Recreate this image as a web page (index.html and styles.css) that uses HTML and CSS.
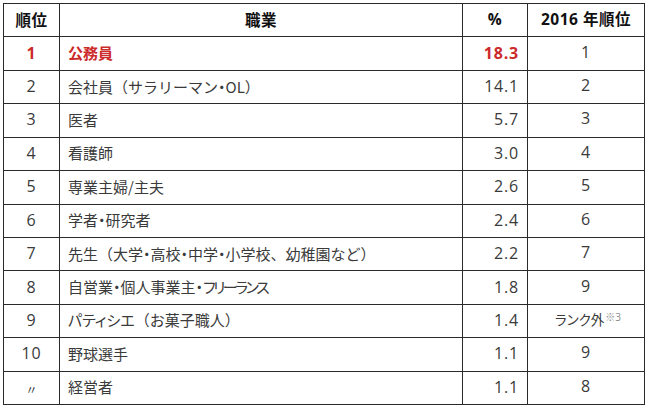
FILE: index.html
```html
<!DOCTYPE html>
<html lang="ja">
<head>
<meta charset="utf-8">
<link rel="stylesheet" href="styles.css">
</head>
<body>
<div class="table">
  <div class="cell rank head">順位</div>
  <div class="cell job head center">職業</div>
  <div class="cell pct head center">%</div>
  <div class="cell prev head">2016 年順位</div>

  <div class="cell rank red bold">1</div>
  <div class="cell job red bold">公務員</div>
  <div class="cell pct red bold">18.3</div>
  <div class="cell prev">1</div>

  <div class="cell rank">2</div>
  <div class="cell job">会社員（サラリーマン<span class="dot">・</span>OL）</div>
  <div class="cell pct">14.1</div>
  <div class="cell prev">2</div>

  <div class="cell rank">3</div>
  <div class="cell job">医者</div>
  <div class="cell pct">5.7</div>
  <div class="cell prev">3</div>

  <div class="cell rank">4</div>
  <div class="cell job">看護師</div>
  <div class="cell pct">3.0</div>
  <div class="cell prev">4</div>

  <div class="cell rank">5</div>
  <div class="cell job">専業主婦/主夫</div>
  <div class="cell pct">2.6</div>
  <div class="cell prev">5</div>

  <div class="cell rank">6</div>
  <div class="cell job">学者<span class="dot">・</span>研究者</div>
  <div class="cell pct">2.4</div>
  <div class="cell prev">6</div>

  <div class="cell rank">7</div>
  <div class="cell job">先生（大学<span class="dot">・</span>高校<span class="dot">・</span>中学<span class="dot">・</span>小学校、幼稚園など）</div>
  <div class="cell pct">2.2</div>
  <div class="cell prev">7</div>

  <div class="cell rank">8</div>
  <div class="cell job">自営業<span class="dot">・</span>個人事業主<span class="dot">・</span><span class="narrow">フリーランス</span></div>
  <div class="cell pct">1.8</div>
  <div class="cell prev">9</div>

  <div class="cell rank">9</div>
  <div class="cell job"><span class="semi">パティシエ</span>（お菓子職人）</div>
  <div class="cell pct">1.4</div>
  <div class="cell prev out"><span class="out-text">ランク外</span><sup class="note">※3</sup></div>

  <div class="cell rank">10</div>
  <div class="cell job">野球選手</div>
  <div class="cell pct">1.1</div>
  <div class="cell prev">9</div>

  <div class="cell rank ditto">〃</div>
  <div class="cell job">経営者</div>
  <div class="cell pct">1.1</div>
  <div class="cell prev">8</div>
</div>
</body>
</html>
```
FILE: styles.css
```css
html, body {
  margin: 0;
  padding: 0;
  background: #ffffff;
}

body {
  padding: 3px 0 0 3px;
}

.table {
  display: grid;
  grid-template-columns: 55px 402px 64px 116px;
  grid-template-rows: repeat(12, 1fr);
  gap: 1px;
  padding: 1px;
  width: 642px;
  height: 402px;
  box-sizing: border-box;
  background: #2a2a2a;
}

.cell {
  background: #ffffff;
  display: flex;
  align-items: center;
  color: #3a3a3a;
  font-family: "Open Sans", "Noto Sans CJK JP", sans-serif;
  font-size: 16px;
  letter-spacing: 0.8px;
  padding-bottom: 2px;
  box-sizing: border-box;
  white-space: nowrap;
}

.rank {
  justify-content: center;
}

.job {
  font-family: "Noto Sans CJK JP", sans-serif;
  font-size: 15px;
  letter-spacing: 0;
  padding-left: 8px;
}

.dot {
  font-feature-settings: "palt";
}

.narrow {
  font-feature-settings: "palt";
  letter-spacing: -2.5px;
}

.semi {
  font-feature-settings: "palt";
}

.pct {
  justify-content: flex-end;
  padding-right: 8px;
}

.prev {
  justify-content: center;
  padding-bottom: 4px;
}

.head {
  color: #111111;
  font-weight: bold;
  font-size: 15.5px;
  letter-spacing: 0.5px;
}

.head.center {
  justify-content: center;
  padding-left: 0;
  padding-right: 0;
}

.bold {
  font-weight: bold;
}

.red {
  color: #cc2b2b;
}

.out {
  padding-left: 4px;
}

.out-text {
  font-family: "Noto Sans CJK JP", sans-serif;
  font-size: 13.5px;
  letter-spacing: 0;
  font-feature-settings: "palt";
}

.note {
  font-size: 10px;
  letter-spacing: 0;
  color: #8a8a8a;
  align-self: flex-start;
  margin-top: 4px;
  margin-left: 1px;
}

.ditto {
  font-family: "Noto Sans CJK JP", sans-serif;
  font-size: 12px;
  letter-spacing: 0;
  padding-top: 6px;
}
```
